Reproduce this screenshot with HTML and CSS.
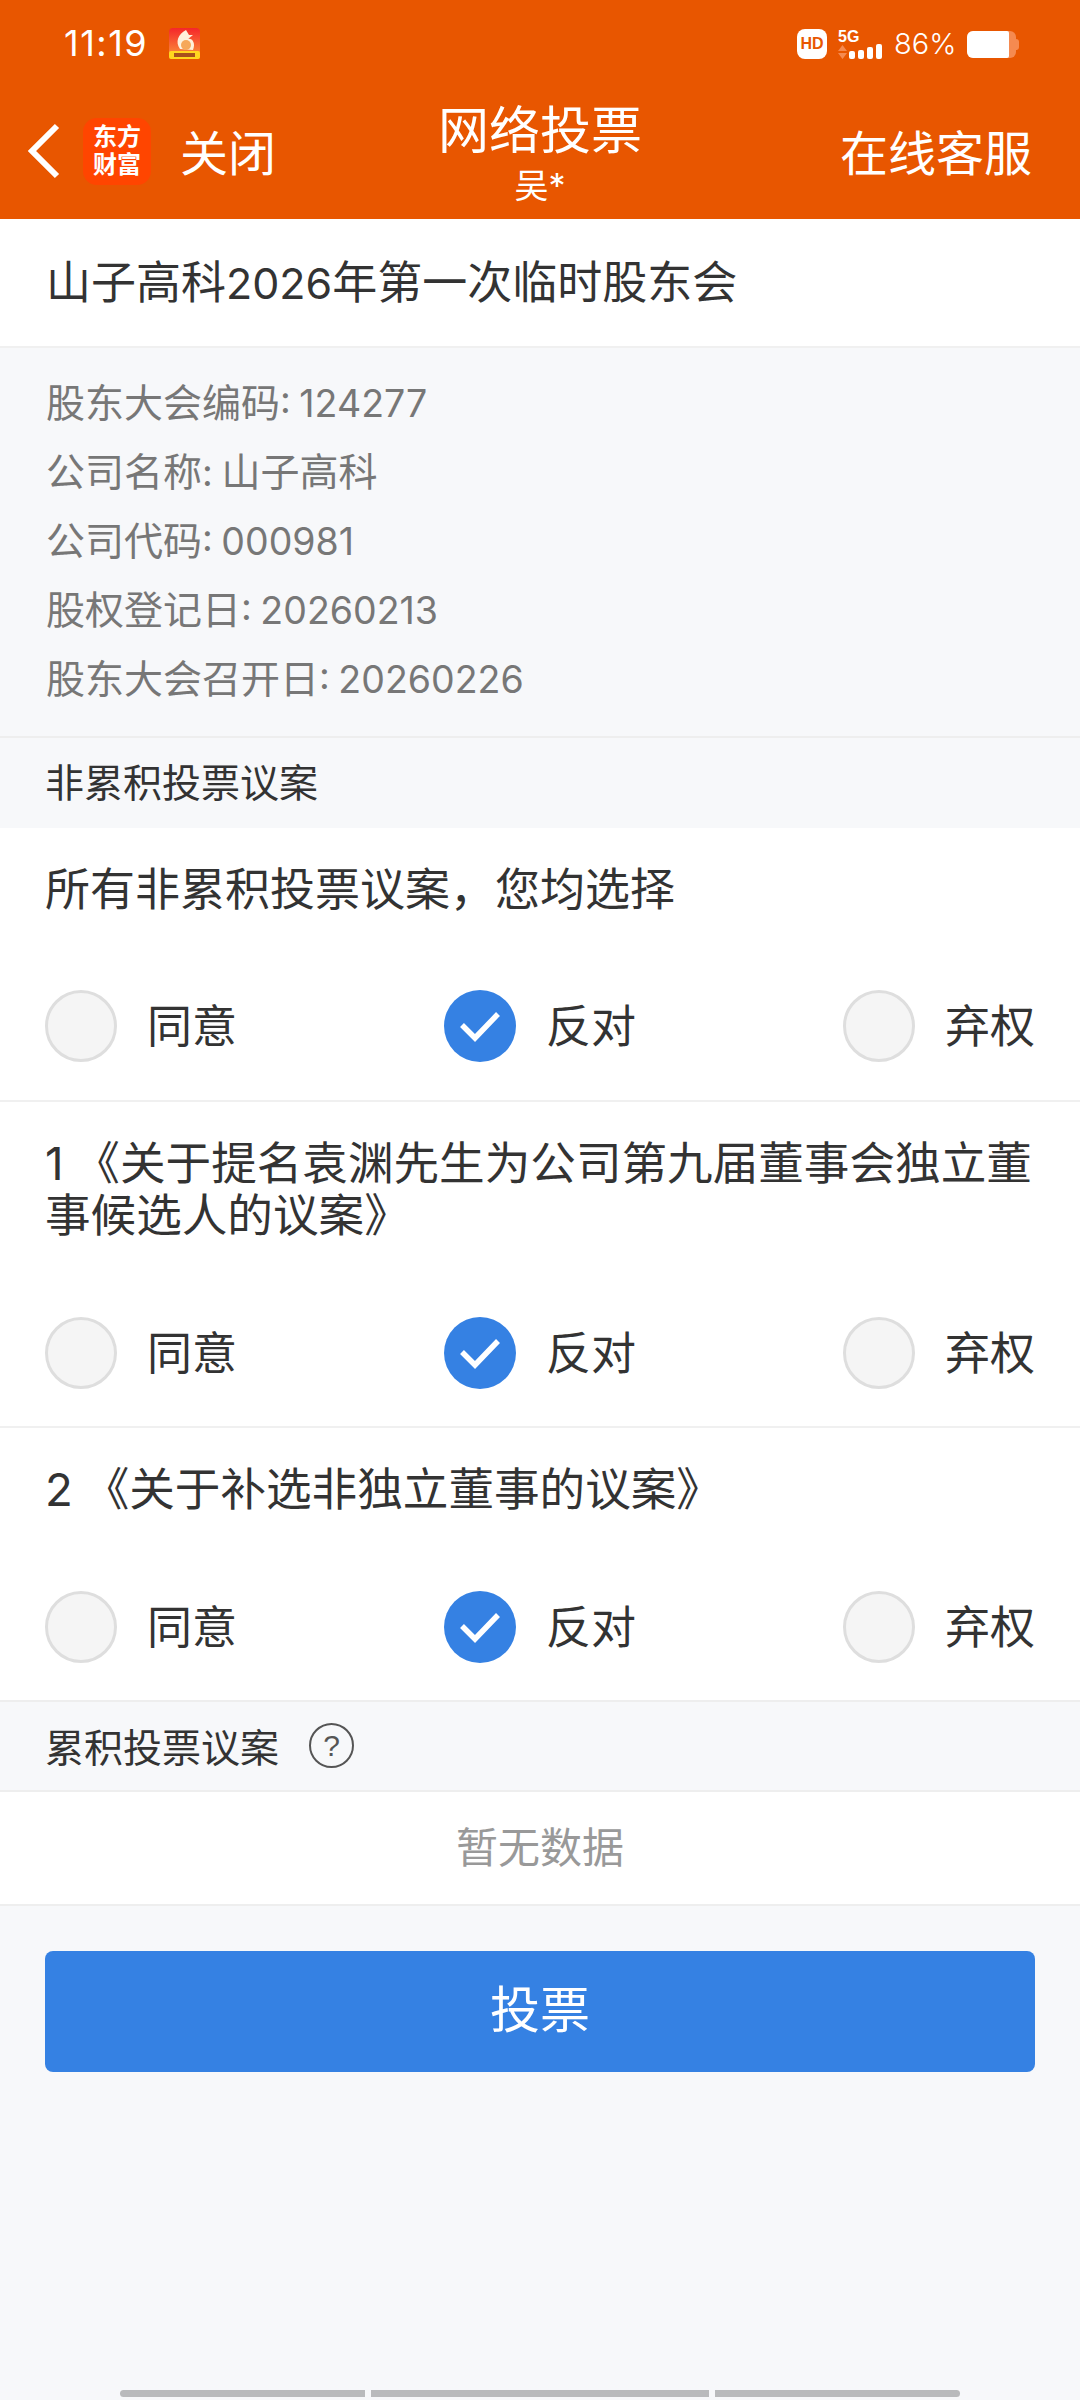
FILE: index.html
```html
<!DOCTYPE html>
<html lang="zh-CN">
<head>
    <meta charset="UTF-8">
    <meta name="viewport" content="width=device-width, initial-scale=1.0">
    <title>网络投票</title>
    <link rel="stylesheet" href="styles.css">
</head>
<body>

    <!-- Header -->
    <div class="header">
        <div class="status-bar">
            <div class="status-left">
                <span class="time">11:19</span>
                <svg class="app-icon" width="31" height="31" viewBox="0 0 31 31">
                    <defs>
                        <linearGradient id="iconBg" x1="0" y1="0" x2="0" y2="1">
                            <stop offset="0" stop-color="#f5262a"/>
                            <stop offset="1" stop-color="#fb9c3c"/>
                        </linearGradient>
                    </defs>
                    <rect width="31" height="31" rx="4" fill="url(#iconBg)"/>
                    <path d="M17 2 C9 6 6 14 11 21 L24 22 C27 15 23 10 19 11 L24 7 L20 7 Z" fill="#fff1dc"/>
                    <circle cx="17" cy="17" r="5" fill="#f6a85a"/>
                    <rect y="23" width="31" height="8" rx="2" fill="#ffd61f"/>
                    <rect x="5" y="25" width="21" height="4" fill="#a8501c"/>
                </svg>
            </div>
            <div class="status-right">
                <span class="hd">HD</span>
                <div class="signal">
                    <span class="five-g">5G</span>
                    <div class="bars">
                        <svg width="9" height="14" viewBox="0 0 9 14">
                            <path d="M4.500 0 L9 6 H0 Z M0 8 H9 L4.500 14 Z" fill="#f58a50"/>
                        </svg>
                        <i class="bar b1"></i><i class="bar b2"></i><i class="bar b3"></i><i class="bar b4"></i>
                    </div>
                </div>
                <span class="battery-text">86%</span>
                <div class="battery"><div class="battery-fill"></div></div>
            </div>
        </div>
        <div class="nav">
            <div class="nav-left">
                <svg class="back" width="36" height="58" viewBox="0 0 36 58">
                    <path d="M31 3 L6 28 L31 53" fill="none" stroke="#fff" stroke-width="6"/>
                </svg>
                <div class="logo">
                    <div class="logo-line">东方</div>
                    <div class="logo-line">财富</div>
                </div>
                <span class="nav-link">关闭</span>
            </div>
            <div class="nav-title">
                <div class="title-main">网络投票</div>
                <div class="title-sub">吴*</div>
            </div>
            <span class="nav-link">在线客服</span>
        </div>
    </div>

    <!-- Meeting -->
    <div class="meeting-name">山子高科<span class="num">2026</span>年第一次临时股东会</div>
    <div class="meeting-info">
        <p>股东大会编码<span class="num">: 124277</span></p>
        <p>公司名称<span class="num">: </span>山子高科</p>
        <p>公司代码<span class="num">: 000981</span></p>
        <p>股权登记日<span class="num">: 20260213</span></p>
        <p>股东大会召开日<span class="num">: 20260226</span></p>
    </div>

    <!-- Non cumulative -->
    <div class="section-head">非累积投票议案</div>

    <div class="motion">
        <div class="motion-text">所有非累积投票议案，您均选择</div>
        <div class="options">
            <div class="option"><span class="radio"></span>同意</div>
            <div class="option"><span class="radio checked"><svg width="44" height="32" viewBox="0 0 44 32"><path d="M4 15 L17 28 L40 4" fill="none" stroke="#fff" stroke-width="5.500"/></svg></span>反对</div>
            <div class="option"><span class="radio"></span>弃权</div>
        </div>
    </div>

    <div class="motion">
        <div class="motion-text numbered">1 《关于提名袁渊先生为公司第九届董事会独立董事候选人的议案》</div>
        <div class="options">
            <div class="option"><span class="radio"></span>同意</div>
            <div class="option"><span class="radio checked"><svg width="44" height="32" viewBox="0 0 44 32"><path d="M4 15 L17 28 L40 4" fill="none" stroke="#fff" stroke-width="5.500"/></svg></span>反对</div>
            <div class="option"><span class="radio"></span>弃权</div>
        </div>
    </div>

    <div class="motion no-border">
        <div class="motion-text numbered">2 《关于补选非独立董事的议案》</div>
        <div class="options">
            <div class="option"><span class="radio"></span>同意</div>
            <div class="option"><span class="radio checked"><svg width="44" height="32" viewBox="0 0 44 32"><path d="M4 15 L17 28 L40 4" fill="none" stroke="#fff" stroke-width="5.500"/></svg></span>反对</div>
            <div class="option"><span class="radio"></span>弃权</div>
        </div>
    </div>

    <!-- Cumulative -->
    <div class="section-head bordered">累积投票议案<span class="help">?</span></div>
    <div class="empty">暂无数据</div>

    <div class="btn-wrap">
        <button class="btn">投票</button>
    </div>

    <!-- Bottom bar -->
    <div class="home-bar">
        <i class="seg seg-left"></i><i class="seg seg-mid"></i><i class="seg seg-right"></i>
    </div>

</body>
</html>
```

FILE: styles.css
```css
* {
    margin: 0;
    padding: 0;
    box-sizing: border-box;
}
body {
    width: 1080px;
    height: 2400px;
    overflow: hidden;
    position: relative;
    background-color: #f7f8fa;
    color: #333;
    font-family: Inter, "Noto Sans CJK SC", sans-serif;
}
/* Header */
.header {
    height: 219px;
    background: #e85600;
    color: #fff;
}
.status-bar {
    height: 84px;
    padding: 21px 64px 0 64px;
    display: flex;
    justify-content: space-between;
    align-items: flex-start;
}
.status-left {
    display: flex;
    align-items: center;
    gap: 21px;
}
.time {
    font-size: 36px;
    letter-spacing: 1.500px;
    line-height: 44px;
}
.app-icon {
    margin-top: 1px;
}
.status-right {
    display: flex;
    align-items: center;
    height: 44px;
    margin-top: 1px;
}
.hd {
    width: 30px;
    height: 30px;
    margin-right: 11px;
    background: #fff;
    color: #e85600;
    border-radius: 8px;
    font-family: "Liberation Sans", sans-serif;
    font-size: 16px;
    font-weight: bold;
    line-height: 30px;
    text-align: center;
}
.signal {
    width: 44px;
    height: 30px;
    margin-right: 12px;
}
.five-g {
    display: block;
    font-family: "Liberation Sans", sans-serif;
    font-size: 16px;
    font-weight: bold;
    line-height: 15px;
}
.bars {
    display: flex;
    align-items: flex-end;
    gap: 3px;
    height: 15px;
}
.bars svg {
    margin-right: -1px;
}
.bar {
    display: block;
    width: 6px;
    background: #fff;
    border-radius: 2px;
}
.b1 { height: 8px; }
.b2 { height: 9px; }
.b3 { height: 12px; }
.b4 { height: 15px; }
.battery-text {
    width: 73px;
    font-size: 29px;
    font-weight: 300;
    line-height: 44px;
}
.battery {
    width: 49px;
    height: 27px;
    background: #f58a50;
    border-radius: 6px;
    position: relative;
}
.battery::after {
    content: "";
    position: absolute;
    right: -3px;
    top: 8px;
    width: 3px;
    height: 11px;
    background: #f58a50;
    border-radius: 0 3px 3px 0;
}
.battery-fill {
    width: 86%;
    height: 100%;
    background: #fff;
    border-radius: 6px 2px 2px 6px;
}
.nav {
    height: 135px;
    padding: 0 48px 0 26px;
    display: flex;
    justify-content: space-between;
    align-items: flex-start;
    position: relative;
}
.nav-left {
    display: flex;
    align-items: center;
    height: 100%;
}
.back {
    margin-right: 21px;
}
.logo {
    width: 68px;
    height: 67px;
    margin-right: 29px;
    padding-top: 5px;
    border-radius: 14px;
    background: #ff4500;
    text-align: center;
}
.logo-line {
    height: 28px;
    font-size: 24px;
    font-weight: 700;
    line-height: 28px;
}
.nav-link {
    font-size: 48px;
    line-height: 66px;
}
.nav > .nav-link {
    margin-top: 37px;
}
.nav-left .nav-link {
    margin-top: 4px;
}
.nav-title {
    position: absolute;
    left: 0;
    right: 0;
    top: 12px;
    text-align: center;
}
.title-main {
    font-size: 51px;
    line-height: 70px;
}
.title-sub {
    font-size: 34px;
    line-height: 40px;
}
/* Meeting */
.meeting-name {
    height: 129px;
    padding-left: 46px;
    background: #fff;
    border-bottom: 2px solid #f0f0f0;
    font-size: 45px;
    line-height: 127px;
}
.meeting-name .num {
    font-size: 43px;
}
.meeting-info {
    height: 390px;
    padding: 20px 46px 0;
    border-bottom: 2px solid #eeeeee;
    color: #777;
    font-size: 39px;
}
.meeting-info p {
    height: 69px;
    line-height: 69px;
}
.meeting-info .num {
    font-size: 37.500px;
    word-spacing: -2px;
}
/* Sections */
.section-head {
    height: 90px;
    padding: 0 0 6px 45px;
    display: flex;
    align-items: center;
    font-size: 39px;
}
.section-head.bordered {
    height: 92px;
    padding-bottom: 2px;
    border-top: 2px solid #eeeeee;
    border-bottom: 2px solid #eeeeee;
}
.help {
    width: 45px;
    height: 45px;
    margin-left: 30px;
    border: 2px solid #555;
    border-radius: 50%;
    color: #555;
    font-family: "Liberation Sans", sans-serif;
    font-size: 30px;
    line-height: 41px;
    text-align: center;
}
.motion {
    background: #fff;
    padding: 0 45px;
    border-bottom: 2px solid #f0f0f0;
}
.motion.no-border {
    border-bottom: none;
}
.motion-text {
    padding: 36px 0 37px;
    font-size: 45px;
    line-height: 52px;
}
.motion-text.numbered {
    margin-right: -5px;
    font-size: 45.600px;
    word-spacing: -2px;
}
.options {
    height: 147px;
    padding-top: 37px;
    display: flex;
    justify-content: space-between;
}
.numbered + .options {
    padding-top: 38px;
}
.option {
    display: flex;
    align-items: center;
    height: 72px;
    padding-bottom: 6px;
    font-size: 45px;
}
.radio {
    align-self: flex-start;
    width: 72px;
    height: 72px;
    margin-right: 30px;
    border: 3px solid #dedede;
    border-radius: 50%;
    background: #f5f5f5;
    display: flex;
    align-items: center;
    justify-content: center;
}
.radio.checked {
    border: none;
    background: #3581e3;
}
.empty {
    height: 114px;
    background: #fff;
    border-bottom: 2px solid #eeeeee;
    color: #999;
    font-size: 42px;
    line-height: 112px;
    text-align: center;
}
.btn-wrap {
    padding: 45px 45px 0;
}
.btn {
    display: block;
    width: 100%;
    height: 121px;
    padding-bottom: 12px;
    border: none;
    border-radius: 8px;
    background: #3581e3;
    color: #fff;
    font-family: "Noto Sans CJK SC", sans-serif;
    font-size: 50px;
}
/* Bottom bar */
.home-bar {
    position: absolute;
    left: 120px;
    bottom: 3px;
    width: 840px;
    height: 7px;
    display: flex;
    gap: 6px;
}
.seg {
    display: block;
    background: #b9babc;
    height: 7px;
}
.seg-left {
    width: 245px;
    border-radius: 4px 0 0 4px;
}
.seg-mid {
    width: 338px;
}
.seg-right {
    width: 245px;
    border-radius: 0 4px 4px 0;
}
```
